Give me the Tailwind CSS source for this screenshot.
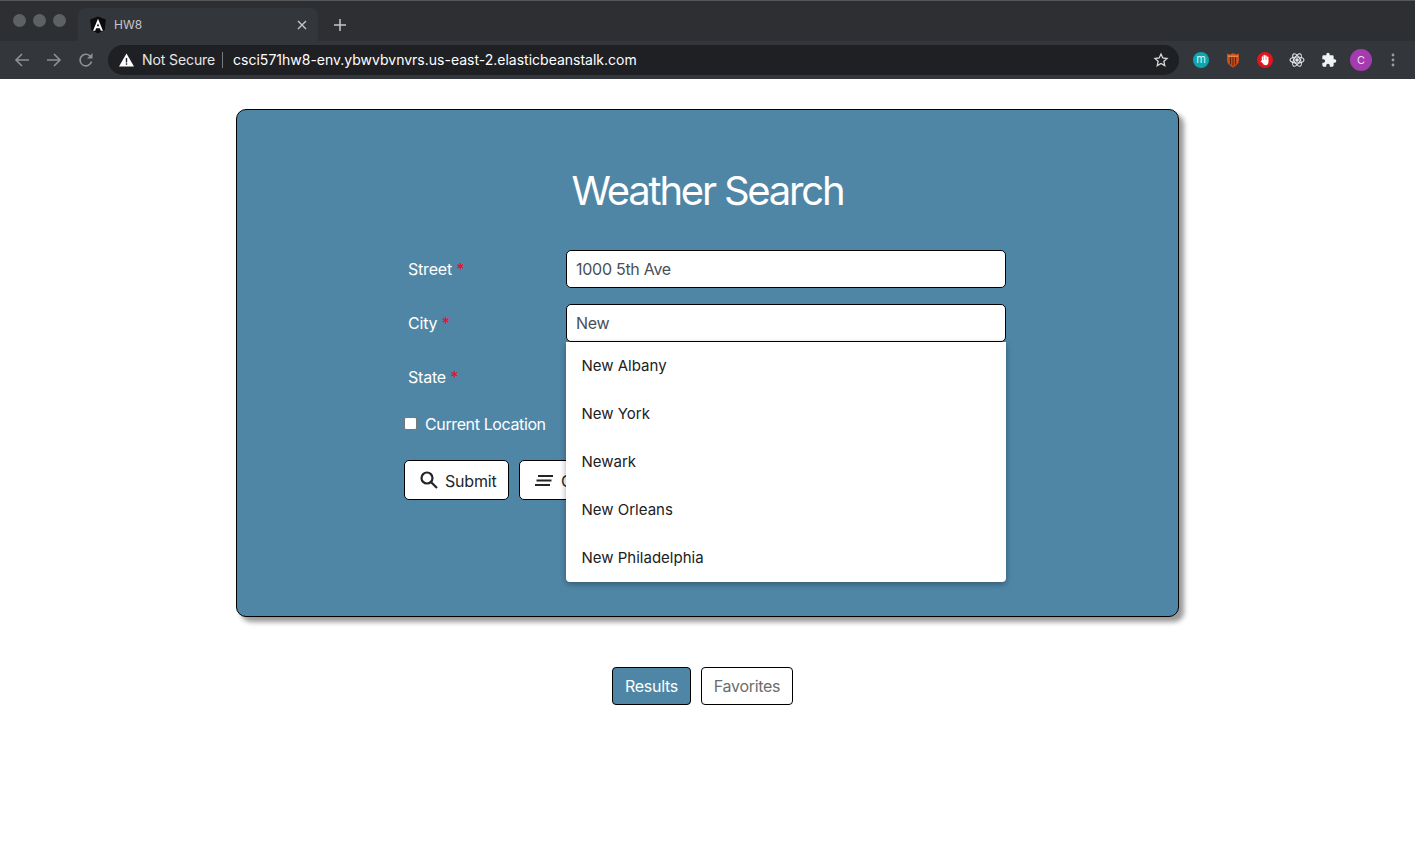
<!DOCTYPE html>
<html>
<head>
<meta charset="utf-8">
<script src="https://cdn.jsdelivr.net/npm/@tailwindcss/browser@4"></script>
<title>HW8</title>
</head>
<body class="bg-white font-['Inter','Liberation_Sans',sans-serif] h-[862px] overflow-hidden">
<header class="h-[79px] bg-[#33363a] flex flex-col">
  <div class="h-[41px] bg-[#2d2f32] border-t border-[#55565a] flex items-end relative">
    <div class="flex gap-[7px] pl-[13px] pb-[14px]">
      <span class="w-[13px] h-[13px] rounded-full bg-[#5e6164]"></span>
      <span class="w-[13px] h-[13px] rounded-full bg-[#5e6164]"></span>
      <span class="w-[13px] h-[13px] rounded-full bg-[#5e6164]"></span>
    </div>
    <div class="ml-[12px] w-[240px] h-[33px] bg-[#33363a] rounded-t-lg flex items-center pl-[11px] pr-[11px] text-[12px] text-[#c4c6ca]">
      <svg class="w-[18px] h-[18px] shrink-0" viewBox="0 0 16 16"><path d="M8 0.5 15 3 14 12.5 8 15.5 2 12.5 1 3z" fill="#0c0c0e"/><path d="M8 2.500 3.600 13h1.900l.8-2.200h3.400l.8 2.200h1.900zM7 9.200 8 6.500 9 9.200z" fill="#fff"/></svg>
      <span class="ml-[7px]">HW8</span>
      <svg class="w-[10px] h-[10px] ml-auto" viewBox="0 0 10 10"><path d="M1 1l8 8M9 1l-8 8" stroke="#c4c6ca" stroke-width="1.4"/></svg>
    </div>
    <svg class="w-3 h-3 ml-[16px] mb-[10px]" viewBox="0 0 12 12"><path d="M6 0v12M0 6h12" stroke="#c4c6ca" stroke-width="1.5"/></svg>
  </div>
  <div class="h-[38px] flex items-center">
    <div class="flex items-center gap-[16px] pl-[14px] w-[108px]">
      <svg class="w-4 h-4" viewBox="0 0 16 16" fill="none" stroke="#8f9194" stroke-width="1.6"><path d="M15 8H2M8 2 2 8l6 6"/></svg>
      <svg class="w-4 h-4" viewBox="0 0 16 16" fill="none" stroke="#8f9194" stroke-width="1.6"><path d="M1 8h13M8 2l6 6-6 6"/></svg>
      <svg class="w-4 h-4" viewBox="0 0 16 16" fill="none" stroke="#8f9194" stroke-width="1.6"><path d="M13.500 9.500A5.800 5.800 0 1 1 12 4"/><path d="M14.500 1v5.500H9z" fill="#8f9194" stroke="none"/></svg>
    </div>
    <div class="w-[1071px] h-[30px] rounded-full bg-[#1f2023] flex items-center pl-[11px] pr-[10px] text-[14px] text-white">
      <svg class="w-[15px] h-[14px] shrink-0" viewBox="0 0 15 14"><path d="M7.500 0.500 15 13.500H0z" fill="#fff"/><path d="M6.800 5h1.400v4.500H6.800zM6.800 10.300h1.400v1.500H6.800z" fill="#1f2023"/></svg>
      <span class="ml-[8px] -mt-px text-[#e6e7e9] tracking-[-0.1px]">Not Secure</span>
      <span class="w-px h-[16px] bg-[#7a7b7e] mx-[7px]"></span>
      <span class="ml-[3px] -mt-px">csci571hw8-env.ybwvbvnvrs.us-east-2.elasticbeanstalk.com</span>
      <svg class="w-4 h-4 ml-auto" viewBox="0 0 24 24" fill="none" stroke="#d5d6d8" stroke-width="2"><path d="M12 3l2.700 6 6.300.7-4.700 4.300 1.300 6.500L12 17.200 6.400 20.500 7.700 14 3 9.700 9.300 9z"/></svg>
    </div>
    <div class="flex items-center flex-1 pl-[14px] gap-[16px]">
      <span class="w-4 h-4 rounded-full bg-[#0fa5ad] text-[#d9f4f5] text-[11px] leading-[15px] text-center shrink-0">m</span>
      <svg class="w-4 h-4 shrink-0" viewBox="0 0 16 16"><path d="M2 1.500l3 1 3-1.500 3 1.500 3-1v7c0 3.500-3.500 5.500-6 7-2.500-1.500-6-3.500-6-7z" fill="#c8501e"/><path d="M5.500 5v7.500M8 5v9M10.500 5v7.500" stroke="#5b2410" stroke-width="1.100"/><path d="M3 4.200h10" stroke="#f0a060" stroke-width="1"/></svg>
      <svg class="w-4 h-4 shrink-0" viewBox="0 0 16 16"><circle cx="8" cy="8" r="8" fill="#e0161e"/><g fill="#fff"><rect x="4.800" y="4.200" width="1.500" height="5" rx=".7"/><rect x="6.500" y="2.800" width="1.500" height="6" rx=".7"/><rect x="8.200" y="3.200" width="1.500" height="6" rx=".7"/><rect x="9.900" y="4.500" width="1.500" height="5" rx=".7"/><path d="M4.800 8h6.600v2.200c0 1.700-1.200 3-2.800 3-1.300 0-2.100-.7-2.700-1.700L3.600 9.200l.6-.6 .6.400z"/></g></svg>
      <svg class="w-4 h-4 shrink-0" viewBox="0 0 16 16" fill="none" stroke="#e6e7e9" stroke-width="1.100"><ellipse cx="8" cy="8" rx="7" ry="3"/><ellipse cx="8" cy="8" rx="7" ry="3" transform="rotate(60 8 8)"/><ellipse cx="8" cy="8" rx="7" ry="3" transform="rotate(120 8 8)"/><circle cx="8" cy="8" r="1.200" fill="#e6e7e9"/></svg>
      <svg class="w-4 h-4 shrink-0" viewBox="0 0 24 24" fill="#f1f2f3"><path d="M20.500 11H19V7a2 2 0 0 0-2-2h-4V3.500a2.500 2.500 0 0 0-5 0V5H4a2 2 0 0 0-2 2v3.800h1.500a2.700 2.700 0 0 1 0 5.400H2V20a2 2 0 0 0 2 2h3.800v-1.500a2.700 2.700 0 0 1 5.400 0V22H17a2 2 0 0 0 2-2v-4h1.500a2.500 2.500 0 0 0 0-5z"/></svg>
      <span class="w-[22px] h-[22px] -ml-[3px] rounded-full bg-[#a43cb0] text-[#f3dff5] text-[11px] leading-[22px] text-center shrink-0">C</span>
      <svg class="w-[4px] h-[14px] ml-[3px] shrink-0" viewBox="0 0 4 14" fill="#9a9c9f"><circle cx="2" cy="2" r="1.400"/><circle cx="2" cy="7" r="1.400"/><circle cx="2" cy="12" r="1.400"/></svg>
    </div>
  </div>
</header>

<main class="pt-[30px] flex flex-col items-center">
  <section class="w-[943px] h-[508px] bg-[#4f86a6] border border-black rounded-[10px] shadow-[5px_5px_5px_#999999] pt-[57px] text-white">
    <h1 class="text-[40px] leading-[48px] text-center font-normal tracking-[-2.2px]">Weather Search</h1>
    <form class="mt-[35px] pl-[167px] flex flex-col text-[16px]">
      <div class="flex items-center h-[38px]">
        <label class="pl-[4px] w-[162px] tracking-[-0.2px]">Street <span class="text-[#e8142c] font-semibold">*</span></label>
        <div class="w-[440px] h-[38px] bg-white border border-black rounded-[5px] pl-[9px] text-[#495057] leading-[36px] tracking-[-0.27px]">1000 5th Ave</div>
      </div>
      <div class="flex items-center h-[38px] mt-[16px]">
        <label class="pl-[4px] w-[162px] tracking-[-0.2px]">City <span class="text-[#e8142c] font-semibold">*</span></label>
        <div class="relative w-[440px] h-[38px] bg-white border border-black rounded-[5px] pl-[9px] text-[#495057] leading-[36px] tracking-[-0.27px]">New
          <ul class="absolute z-10 left-[-1px] top-[37px] w-[440px] bg-white rounded-b-[4px] shadow-[0_2px_6px_rgba(0,0,0,0.35)] text-[#212121] text-[15px] leading-[47px] tracking-normal">
            <li class="h-[48px] pl-[15.500px]">New Albany</li>
            <li class="h-[48px] pl-[15.500px]">New York</li>
            <li class="h-[48px] pl-[15.500px]">Newark</li>
            <li class="h-[48px] pl-[15.500px]">New Orleans</li>
            <li class="h-[48px] pl-[15.500px]">New Philadelphia</li>
          </ul>
        </div>
      </div>
      <div class="flex items-center h-[38px] mt-[16px]">
        <label class="pl-[4px] w-[162px] tracking-[-0.2px]">State <span class="text-[#e8142c] font-semibold">*</span></label>
      </div>
      <label class="flex items-center h-[24px] mt-[16px]">
        <span class="w-[13px] h-[13px] -mt-px bg-white rounded-[2px] border border-[#767676]"></span>
        <span class="ml-[8px] tracking-[-0.38px]">Current Location</span>
      </label>
      <div class="flex gap-[10px] mt-[24px]">
        <button type="button" class="flex items-center w-[105px] h-[40px] bg-white border border-black rounded-[5px] text-[#212529] pl-[14px]">
          <svg class="w-[20px] h-[20px]" viewBox="0 0 20 20" fill="none" stroke="#212529" stroke-width="2.200"><circle cx="8" cy="8" r="5.500"/><path d="M12 12l6 6"/></svg>
          <span class="ml-[6px] mt-px tracking-[-0.2px]">Submit</span>
        </button>
        <button type="button" class="flex items-center w-[100px] h-[40px] bg-white border border-black rounded-[5px] text-[#212529] pl-[15px]">
          <svg class="w-[20px] h-[20px] shrink-0" viewBox="0 0 20 20" fill="none" stroke="#212529" stroke-width="2"><path d="M3 6h15M1.500 10.500h15M0 15h15"/></svg>
          <span class="ml-[6px] mt-px">Clear</span>
        </button>
      </div>
    </form>
  </section>
  <nav class="flex gap-[10px] mt-[50px] pr-[10px] text-[16px]">
    <a class="w-[79px] h-[38px] bg-[#4f86a6] border border-black rounded-[4px] text-white text-center leading-[36px] tracking-[-0.3px]">Results</a>
    <a class="w-[92px] h-[38px] bg-white border border-black rounded-[4px] text-[#6c6c6c] text-center leading-[36px] tracking-[-0.3px]">Favorites</a>
  </nav>
</main>
</body>
</html>
